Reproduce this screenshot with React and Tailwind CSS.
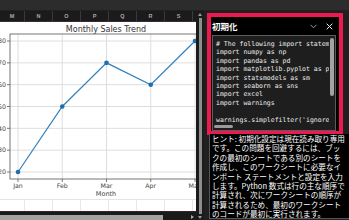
import React from 'react'

const cols = ['M', 'N', 'O', 'P', 'Q', 'R', 'S']

const codeLines = [
  '# The following import statements',
  'import numpy as np',
  'import pandas as pd',
  'import matplotlib.pyplot as plt',
  'import statsmodels as sm',
  'import seaborn as sns',
  'import excel',
  'import warnings',
  '',
  "warnings.simplefilter('ignore')",
]

const hintLines = [
  'ヒント: 初期化設定は現在読み取り専用',
  'です。この問題を回避するには、ブッ',
  'クの最初のシートである別のシートを',
  '作成し、このワークシートに必要なイ',
  'ンポート ステートメントと設定を入力',
  'します。Python 数式は行の主な順序で',
  '計算され、次にワークシートの順序が',
  '計算されるため、最初のワークシート',
  'のコードが最初に実行されます。',
]

const months = ['Jan', 'Feb', 'Mar', 'Apr', 'May']
const sales = [20, 50, 70, 60, 80]
const yTicks = [20, 30, 40, 50, 60, 70, 80]
const xAt = (i) => 18 + i * 44.25
const yAt = (v) => 150 - (v - 20) * 2.183

function SalesChart() {
  const pts = sales.map((v, i) => `${xAt(i)},${yAt(v)}`).join(' ')
  return (
    <svg width="196" height="177" className="block" style={{ fontFamily: '"DejaVu Sans", sans-serif' }}>
      <rect x="0" y="0" width="196" height="177" fill="#ffffff" />
      <text x="106" y="10" textAnchor="middle" fontSize="8" fill="#333">Monthly Sales Trend</text>
      {yTicks.map((v) => (
        <g key={v}>
          <line x1="10" x2="196" y1={yAt(v)} y2={yAt(v)} stroke="#dedede" strokeWidth="1" />
          <line x1="7" x2="10" y1={yAt(v)} y2={yAt(v)} stroke="#555" strokeWidth="0.8" />
          <text x="6" y={yAt(v) + 2.2} textAnchor="end" fontSize="6.3" fill="#444">{v}</text>
        </g>
      ))}
      {months.map((m, i) => (
        <g key={m}>
          <line x1={xAt(i)} x2={xAt(i)} y1="12" y2="157" stroke="#dedede" strokeWidth="1" />
          <line x1={xAt(i)} x2={xAt(i)} y1="157" y2="160" stroke="#555" strokeWidth="0.8" />
          <text x={xAt(i)} y="166" textAnchor="middle" fontSize="6.3" fill="#444">{m}</text>
        </g>
      ))}
      <rect x="10" y="12" width="190" height="145" fill="none" stroke="#666" strokeWidth="0.9" />
      <polyline points={pts} fill="none" stroke="#3282bd" strokeWidth="1.2" />
      {sales.map((v, i) => (
        <circle key={i} cx={xAt(i)} cy={yAt(v)} r="2.3" fill="#1f6fae" />
      ))}
      <text x="106" y="174" textAnchor="middle" fontSize="6.5" fill="#444">Month</text>
    </svg>
  )
}

export default function App() {
  return (
    <div className="w-[349px] h-[220px] bg-[#1e1e1e] flex flex-col overflow-hidden">
      {/* top bar */}
      <div className="h-[11px] shrink-0 bg-[#2c2c2c] border-b border-[#202020]" />

      <div className="flex flex-1 min-h-0">
        {/* sheet */}
        <div className="w-[196px] flex flex-col shrink-0">
          <div className="h-[11px] shrink-0 flex bg-[#1b1b1b] border-b border-[#3b2a38]">
            {cols.map((c, i) => (
              <div
                key={c}
                className={`${i === 0 ? 'w-[25px]' : 'w-[28px]'} shrink-0 flex items-center justify-center border-r border-[#3a3a3a] text-[5.5px] font-bold text-[#a8a8a8]`}
                style={{ fontFamily: '"Liberation Sans", sans-serif' }}
              >
                {c}
              </div>
            ))}
          </div>
          <div className="flex-1 bg-white flex flex-col overflow-hidden">
            <SalesChart />
            <div className="flex-1 flex border-t border-[#e4e4e4]">
              <div className="w-[25px] shrink-0 border-r border-[#e8e8e8]" />
              {cols.slice(1).map((c) => (
                <div key={c} className="w-[28px] shrink-0 border-r border-[#e8e8e8]" />
              ))}
            </div>
          </div>
          <div className="h-[9px] shrink-0 bg-[#1a1a1a] border-t border-[#3a2229] flex items-end">
            <div className="w-[163px] h-[5px] bg-[#a3a3a3]" />
            <div className="flex-1 flex justify-end pr-[2px] pb-[1px]">
              <svg width="3" height="4"><path d="M0 0 L3 2 L0 4 Z" fill="#aaa" /></svg>
            </div>
          </div>
        </div>

        {/* sheet vertical scrollbar */}
        <div className="w-[8px] shrink-0 bg-[#1b1b1b] flex flex-col items-center pt-[2px] pb-[1px]">
          <svg width="4" height="3"><path d="M0 3 L2 0 L4 3 Z" fill="#999" /></svg>
          <div className="w-[3px] flex-1 bg-[#8e8e8e] my-[2px]" />
          <svg width="4" height="3"><path d="M0 0 L2 3 L4 0 Z" fill="#999" /></svg>
        </div>

        {/* task pane */}
        <div className="flex-1 flex flex-col pl-[3px] pt-[2px] bg-[#202020]">
          <div className="w-[136px] h-[122px] shrink-0 border-[4px] border-[#ec1a50] bg-black flex flex-col">
            <div className="h-[18px] shrink-0 flex items-center pl-[1px] pr-[4px]">
              <span
                className="text-[8.5px] font-bold text-white flex-1"
                style={{ fontFamily: '"Noto Sans CJK JP", sans-serif' }}
              >
                初期化
              </span>
              <svg width="7" height="5" className="mr-[9px]">
                <path d="M0.5 0.8 L3.5 3.8 L6.5 0.8" fill="none" stroke="#aaa" strokeWidth="0.9" />
              </svg>
              <svg width="7" height="7" className="mr-[2px]">
                <path d="M0.7 0.7 L6.3 6.3 M6.3 0.7 L0.7 6.3" fill="none" stroke="#eee" strokeWidth="1" />
              </svg>
            </div>
            <div className="flex-1 ml-[1px] mr-[3px] border border-[#5c5c5c] bg-[#1e1e1e] flex flex-col overflow-hidden">
              <div className="flex flex-1 min-h-0">
                <div
                  className="flex-1 pl-[3px] pt-[4px] overflow-hidden whitespace-pre text-[6.5px] leading-[8.4px] text-[#ececec]"
                  style={{ fontFamily: '"DejaVu Sans Mono", monospace' }}
                >
                  {codeLines.map((l, i) => (
                    <div key={i} className="h-[8.4px]">{l}</div>
                  ))}
                </div>
                <div className="w-[6px] shrink-0 pt-[2px] flex justify-center">
                  <div className="w-[4px] h-[58px] rounded-[2px] bg-[#a3a3a3]" />
                </div>
              </div>
              <div className="h-[5px] shrink-0 pl-[1px] pb-[1px] flex items-start">
                <div className="w-[19px] h-[3px] rounded-[2px] bg-[#9a9a9a]" />
              </div>
            </div>
          </div>

          <div
            className="ml-[2px] mt-[-1px] h-[85px] shrink-0 bg-black border-l border-b border-[#555] pl-[2px] overflow-hidden whitespace-nowrap text-[7.6px] leading-[9.4px] text-white"
            style={{ fontFamily: '"Noto Sans CJK JP", sans-serif' }}
          >
            {hintLines.map((l, i) => (
              <div key={i} className="h-[9.4px]">{l}</div>
            ))}
          </div>
        </div>
      </div>
    </div>
  )
}
